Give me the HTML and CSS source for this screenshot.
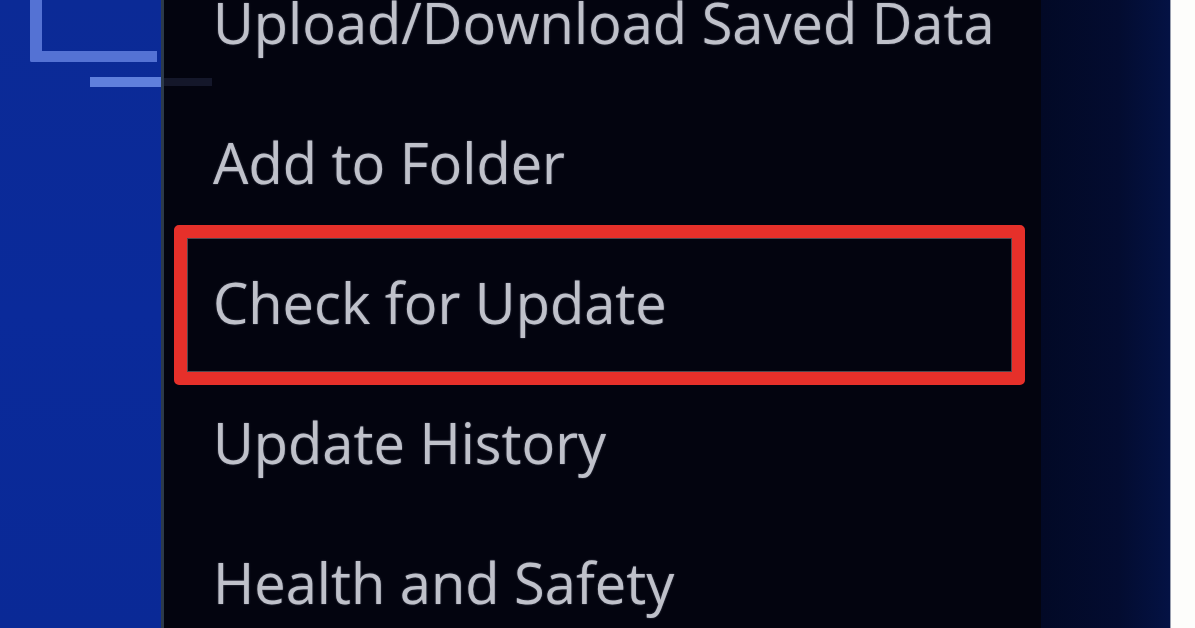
FILE: index.html
```html
<!DOCTYPE html>
<html lang="en">
<head>
<meta charset="utf-8">
<title>Options Menu</title>
<link rel="stylesheet" href="styles.css">
</head>
<body>
<div class="screen">
  <aside class="tile-side">
    <div class="tile-frame"></div>
    <div class="tile-bar"></div>
  </aside>
  <main class="menu">
    <div class="ghost-bar"></div>
    <ul class="menu-list">
      <li class="menu-item">Upload/Download Saved Data</li>
      <li class="menu-item">Add to Folder</li>
      <li class="menu-item selected">Check for Update</li>
      <li class="menu-item">Update History</li>
      <li class="menu-item">Health and Safety</li>
    </ul>
  </main>
  <div class="backdrop"></div>
  <div class="page-edge"></div>
</div>
</body>
</html>
```

FILE: styles.css
```css
html, body {
  margin: 0;
  padding: 0;
  width: 1195px;
  height: 628px;
  overflow: hidden;
  background: #ffffff;
}

.screen {
  display: flex;
  width: 1195px;
  height: 628px;
  overflow: hidden;
}

.tile-side {
  flex: 0 0 161px;
  min-width: 0;
  overflow: hidden;
  background: linear-gradient(180deg, #0b2a96 0%, #0a2a9a 50%, #0a2996 100%);
  border-right: 3px solid #2c3a4a;
}

.tile-frame {
  margin-left: 30px;
  width: 115px;
  height: 51px;
  border-left: 12px solid #5472d4;
  border-bottom: 11px solid #5472d4;
  border-radius: 0 0 0 2px;
}

.tile-bar {
  margin: 15px 0 0 90px;
  width: 71px;
  height: 10px;
  background: #5f7fdc;
}

.menu {
  position: relative;
  flex: 0 0 877px;
  min-width: 0;
  background: #03040f;
  font-family: "Open Sans", "DejaVu Sans", sans-serif;
}

.ghost-bar {
  position: absolute;
  left: 0;
  top: 78px;
  width: 48px;
  height: 8px;
  background: #14172a;
}

.menu-list {
  list-style: none;
  margin: -48px 0 0 0;
  padding: 0 0 0 49px;
}

.menu-item {
  position: relative;
  height: 140px;
  line-height: 140px;
  font-size: 56px;
  font-weight: 400;
  color: #bfc1ca;
  letter-spacing: 0;
  white-space: nowrap;
  text-shadow: 0 0 2px rgba(190, 195, 215, 0.45);
}

.menu-item.selected::after {
  content: "";
  position: absolute;
  left: -39px;
  right: 16px;
  top: -7px;
  bottom: -13px;
  border: 13px solid #e6302a;
  border-radius: 5px;
  box-shadow: inset 0 0 0 1px rgba(220, 200, 200, 0.35);
}

.backdrop {
  flex: 0 0 129px;
  background: linear-gradient(90deg, #020926 0%, #030c30 60%, #041244 100%);
}

.page-edge {
  flex: 1 1 auto;
  background: #fdfdfb;
  border-left: 1px solid #9aa0b0;
}
```
